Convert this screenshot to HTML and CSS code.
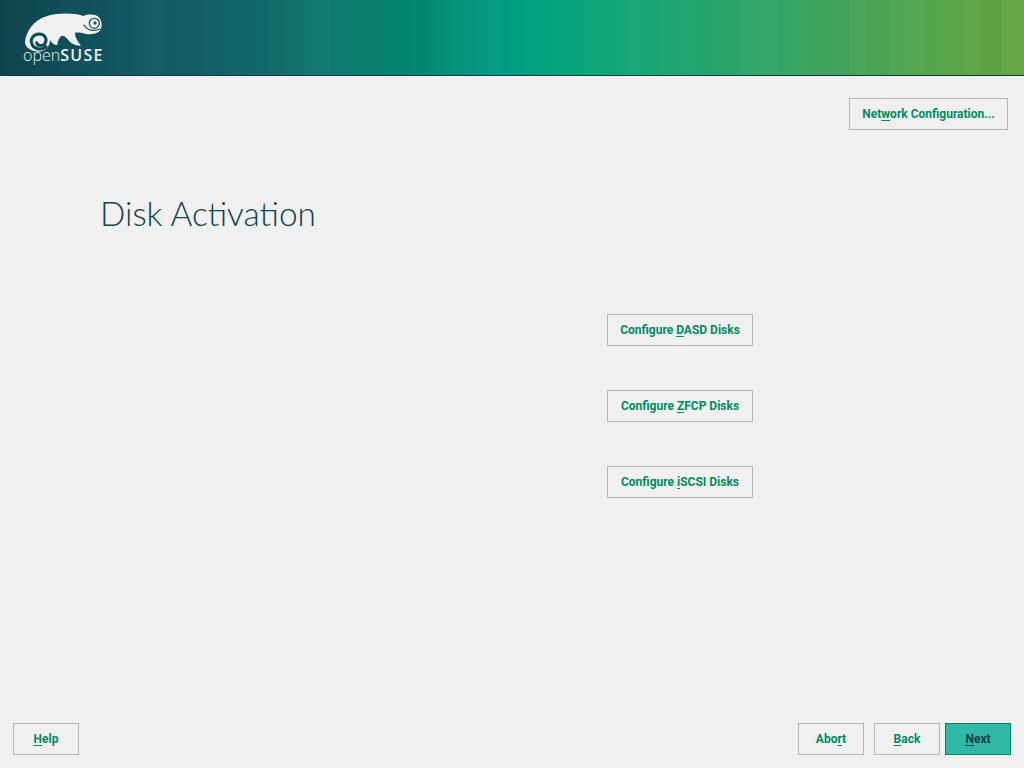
FILE: index.html
```html
<!DOCTYPE html>
<html lang="en">
<head>
<meta charset="utf-8">
<title>Disk Activation</title>
<link rel="stylesheet" href="styles.css">
</head>
<body>
<header class="banner">
  <div class="logo">
    <svg class="logo-mark" width="82" height="40" viewBox="69 39 246 120" aria-hidden="true">
      <path class="logo-fill" d="M75 125C78 95 100 62 135 50C165 40 215 36 250 48C265 42 285 42 295 50C305 58 307 78 303 88C297 100 275 106 255 101C245 98 232 96 225 98C224 110 232 125 243 137C228 138 212 130 205 120C200 113 195 108 188 107C178 108 174 122 172 135C165 136 155 130 150 120C150 140 135 155 115 155C90 155 74 140 75 125Z"/>
      <circle class="logo-ring" cx="283" cy="70" r="15"/>
      <circle class="logo-pupil" cx="285" cy="69" r="5"/>
      <path class="logo-line" d="M252 75C262 92 282 95 301 87"/>
      <path class="logo-line logo-spiral" d="M138 140C128 150 105 150 97 135C88 118 100 102 118 102C135 102 143 118 135 130C128 140 112 138 110 128"/>
    </svg>
    <div class="logo-word"><span class="logo-open">open</span><span class="logo-suse">SUSE</span></div>
  </div>
</header>
<main class="content">
  <div class="top-row">
    <button class="btn btn-network">Net<u>w</u>ork Configuration...</button>
  </div>
  <h1 class="title">Disk Activation</h1>
  <div class="actions">
    <button class="btn btn-wide">Configure <u>D</u>ASD Disks</button>
    <button class="btn btn-wide">Configure <u>Z</u>FCP Disks</button>
    <button class="btn btn-wide">Configure <u>i</u>SCSI Disks</button>
  </div>
</main>
<footer class="footer">
  <button class="btn btn-nav"><u>H</u>elp</button>
  <div class="footer-right">
    <button class="btn btn-nav btn-abort">Abo<u>r</u>t</button>
    <button class="btn btn-nav btn-back"><u>B</u>ack</button>
    <button class="btn btn-nav btn-next"><u>N</u>ext</button>
  </div>
</footer>
</body>
</html>
```
FILE: styles.css
```css
* { box-sizing: border-box; }
html, body { margin: 0; height: 100%; }
body {
  width: 1024px;
  height: 768px;
  overflow: hidden;
  display: flex;
  flex-direction: column;
  background: #f0f0f0;
  font-family: Roboto, "Liberation Sans", sans-serif;
}
.banner {
  height: 76px;
  flex: none;
  border-bottom: 1px solid #0c3c42;
  background:
    linear-gradient(90deg,
      transparent 0 145px, rgba(255,255,255,.015) 145px 165px, rgba(0,0,0,.02) 165px 205px,
      transparent 205px 218px, rgba(0,60,90,.05) 218px 224px, transparent 224px 288px,
      rgba(255,255,255,.015) 288px 330px, transparent 330px 347px, rgba(0,0,0,.01) 347px 410px,
      transparent 410px 430px, rgba(255,255,255,.015) 430px 500px, transparent 500px 627px,
      rgba(255,255,255,.035) 627px 640px, transparent 640px 660px, rgba(255,255,255,.015) 660px 695px,
      transparent 695px 738px, rgba(255,255,255,.015) 738px 778px, transparent 778px 810px,
      rgba(0,0,0,.01) 810px 850px, rgba(255,255,255,.025) 850px 866px, transparent 866px 890px,
      rgba(255,255,255,.015) 890px 925px, transparent 925px 965px, rgba(255,255,255,.025) 965px 980px,
      rgba(0,0,0,.02) 980px 1002px, rgba(255,255,255,.02) 1002px 1024px),
    linear-gradient(90deg,
      #0e4450 0, #135a62 145px, #11686a 265px, #0d7a70 330px, #038870 420px, #009a85 500px,
      #04a57d 560px, #1aa573 660px, #30a566 760px, #45a45a 850px, #55a54e 930px, #65a440 1024px);
  padding: 13px 0 0 23px;
}
.logo { width: 82px; color: #eef1ef; }
.logo-mark { display: block; }
.logo-fill { fill: #eef1ef; }
.logo-ring { fill: #eef1ef; stroke: #14565c; stroke-width: 4; }
.logo-pupil { fill: #14565c; }
.logo-line { fill: none; stroke: #14565c; stroke-width: 4; stroke-linecap: round; }
.logo-spiral { stroke-width: 9; stroke: #0f4a53; }
.logo-word { display: flex; align-items: baseline; margin-top: -5px; line-height: 15px; font-family: "Open Sans", sans-serif; }
.logo-open { font-size: 16px; font-weight: 300; }
.logo-suse { font-size: 16px; font-weight: 600; letter-spacing: 1.300px; }
.content { flex: 1; display: flex; flex-direction: column; }
.top-row { display: flex; justify-content: flex-end; padding: 22px 16px 0 0; }
.title {
  margin: 60px 0 0 100px;
  font-family: Lato, sans-serif;
  font-weight: 300;
  font-size: 33.400px;
  line-height: 46px;
  color: #0e4148;
}
.actions {
  display: flex;
  flex-direction: column;
  gap: 44px;
  margin: 78px 0 0 607px;
  width: 146px;
}
.btn {
  height: 32px;
  padding: 0;
  border: 1px solid #b5b5b5;
  background: #f0f0f0;
  color: #008a62;
  font-family: Roboto, sans-serif;
  font-size: 12px;
  font-weight: 700;
  line-height: 30px;
  text-align: center;
}
.btn u { text-underline-offset: 2px; }
.btn-network { width: 159px; }
.btn-wide { width: 146px; }
.footer {
  flex: none;
  display: flex;
  justify-content: space-between;
  padding: 0 13px 13px;
}
.footer-right { display: flex; }
.btn-nav { width: 66px; }
.btn-abort { margin-right: 10px; }
.btn-back { margin-right: 5px; }
.btn-next { background: #30b9a5; border-color: #00855f; color: #0f3e46; }
```
